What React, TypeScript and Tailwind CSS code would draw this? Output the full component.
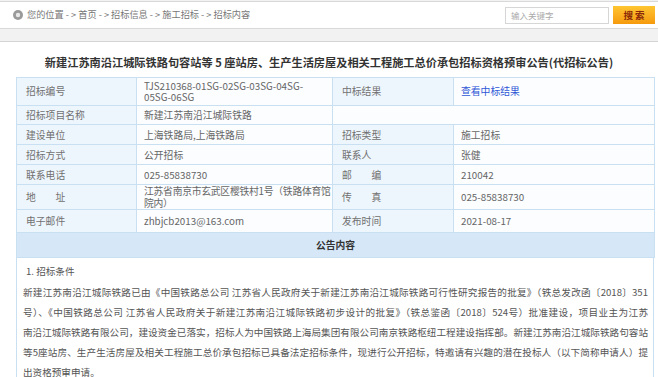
import React from "react";

const font = { fontFamily: '"Noto Sans CJK SC", "Noto Sans", sans-serif' };

function Label({ children }: { children?: React.ReactNode }) {
  return (
    <td className="border border-[#c9dff2] bg-[#eef6fd] pl-[9px] pr-[4px] text-[#707070] align-middle whitespace-nowrap overflow-hidden">
      {children}
    </td>
  );
}

function Val({ children, colSpan, className = "" }: { children?: React.ReactNode; colSpan?: number; className?: string }) {
  return (
    <td
      colSpan={colSpan}
      className={`border border-[#c9dff2] bg-[#fbfdff] pl-[7px] pr-[2px] text-[#666] align-middle whitespace-nowrap overflow-hidden ${className}`}
    >
      {children}
    </td>
  );
}

export default function App() {
  const lines = [
    "新建江苏南沿江城际铁路已由《中国铁路总公司 江苏省人民政府关于新建江苏南沿江城际铁路可行性研究报告的批复》（铁总发改函〔2018〕351",
    "号）、《中国铁路总公司 江苏省人民政府关于新建江苏南沿江城际铁路初步设计的批复》（铁总鉴函〔2018〕524号）批准建设，项目业主为江苏",
    "南沿江城际铁路有限公司，建设资金已落实，招标人为中国铁路上海局集团有限公司南京铁路枢纽工程建设指挥部。新建江苏南沿江城际铁路句容站",
    "等5座站房、生产生活房屋及相关工程施工总价承包招标已具备法定招标条件，现进行公开招标，特邀请有兴趣的潜在投标人（以下简称申请人）提",
  ];
  return (
    <div className="w-[658px] h-[377px] overflow-hidden bg-[#f2f2f2]" style={font}>
      {/* top bar */}
      <div className="mt-[1px] h-[28px] bg-white border-t border-b border-[#d9d9d9] flex items-center pl-[13px] pr-[3px]">
        <svg width="10" height="10" viewBox="0 0 10 10" className="shrink-0">
          <circle cx="5" cy="5" r="5" fill="#9a9a9a" />
          <circle cx="5" cy="5" r="2.2" fill="#e8e8e8" />
        </svg>
        <div className="ml-[4px] text-[9.2px] text-[#777] leading-none whitespace-nowrap">
          您的位置 - &gt; 首页 - &gt; 招标信息 - &gt; 施工招标 - &gt; 招标内容
        </div>
        <div className="ml-auto flex items-center gap-[4px]">
          <div className="w-[104px] h-[17px] border border-[#d6d6d6] bg-white flex items-center pl-[5px] text-[8.5px] text-[#aaa]">
            输入关键字
          </div>
          <div className="w-[42px] h-[18px] bg-gradient-to-b from-[#ffc531] to-[#f59a0b] flex items-center justify-center text-[9.5px] font-bold text-[#8a2a08]">
            搜&nbsp;索
          </div>
        </div>
      </div>
      <div className="h-[12px]" />
      {/* panel */}
      <div className="bg-white border-t border-[#d4d4d4] h-[400px]">
        <div className="pt-[13px] pb-[8px] text-center text-[11.2px] leading-[14px] font-bold text-[#333] whitespace-nowrap">
          新建江苏南沿江城际铁路句容站等 5 座站房、生产生活房屋及相关工程施工总价承包招标资格预审公告(代招标公告)
        </div>
        <div className="ml-[16px] w-[638px]">
          <table className="border-collapse w-full text-[9.8px] table-fixed">
            <colgroup>
              <col className="w-[120px]" />
              <col className="w-[196px]" />
              <col className="w-[121px]" />
              <col className="w-[201px]" />
            </colgroup>
            <tbody>
              <tr className="h-[28px]">
                <Label>招标编号</Label>
                <Val className="leading-[11px]">
                  TJS210368-01SG-02SG-03SG-04SG-
                  <br />
                  05SG-06SG
                </Val>
                <Label>中标结果</Label>
                <Val>
                  <span className="text-[#2f57d6]">查看中标结果</span>
                </Val>
              </tr>
              <tr className="h-[19px] leading-[12px]">
                <Label>招标项目名称</Label>
                <Val>新建江苏南沿江城际铁路</Val>
                <Val colSpan={2} className="bg-[#f7fbfe]"></Val>
              </tr>
              <tr className="h-[20px] leading-[12px]">
                <Label>建设单位</Label>
                <Val>上海铁路局,上海铁路局</Val>
                <Label>招标类型</Label>
                <Val>施工招标</Val>
              </tr>
              <tr className="h-[20px] leading-[12px]">
                <Label>招标方式</Label>
                <Val>公开招标</Val>
                <Label>联系人</Label>
                <Val>张健</Val>
              </tr>
              <tr className="h-[20px] leading-[12px]">
                <Label>联系电话</Label>
                <Val>025-85838730</Val>
                <Label>邮　　编</Label>
                <Val>210042</Val>
              </tr>
              <tr className="h-[24px] leading-[12px]">
                <Label>地　　址</Label>
                <Val className="leading-[12px] tracking-[-0.25px]">
                  江苏省南京市玄武区樱铁村1号（铁路体育馆
                  <br />
                  院内）
                </Val>
                <Label>传　　真</Label>
                <Val>025-85838730</Val>
              </tr>
              <tr className="h-[23px] leading-[12px]">
                <Label>电子邮件</Label>
                <Val>zhbjcb2013@163.com</Val>
                <Label>发布时间</Label>
                <Val>2021-08-17</Val>
              </tr>
              <tr className="h-[25px] leading-[12px]">
                <td colSpan={4} className="border border-[#c9dff2] bg-[#d6e8f7] text-center font-bold text-[#333]">
                  公告内容
                </td>
              </tr>
            </tbody>
          </table>
          <div className="border-l border-r border-[#c9dff2] pl-[6px] pr-[5px] pt-[3px] text-[9.6px] text-[#555] h-[200px]">
            <div className="leading-[20px] pl-[3px]">1. 招标条件</div>
            <div className="mt-[1px]">
              {lines.map((l, i) => (
                <div key={i} className="leading-[20px] whitespace-nowrap text-justify [text-align-last:justify]">
                  {l}
                </div>
              ))}
              <div className="leading-[20px]">出资格预审申请。</div>
            </div>
          </div>
        </div>
      </div>
    </div>
  );
}
